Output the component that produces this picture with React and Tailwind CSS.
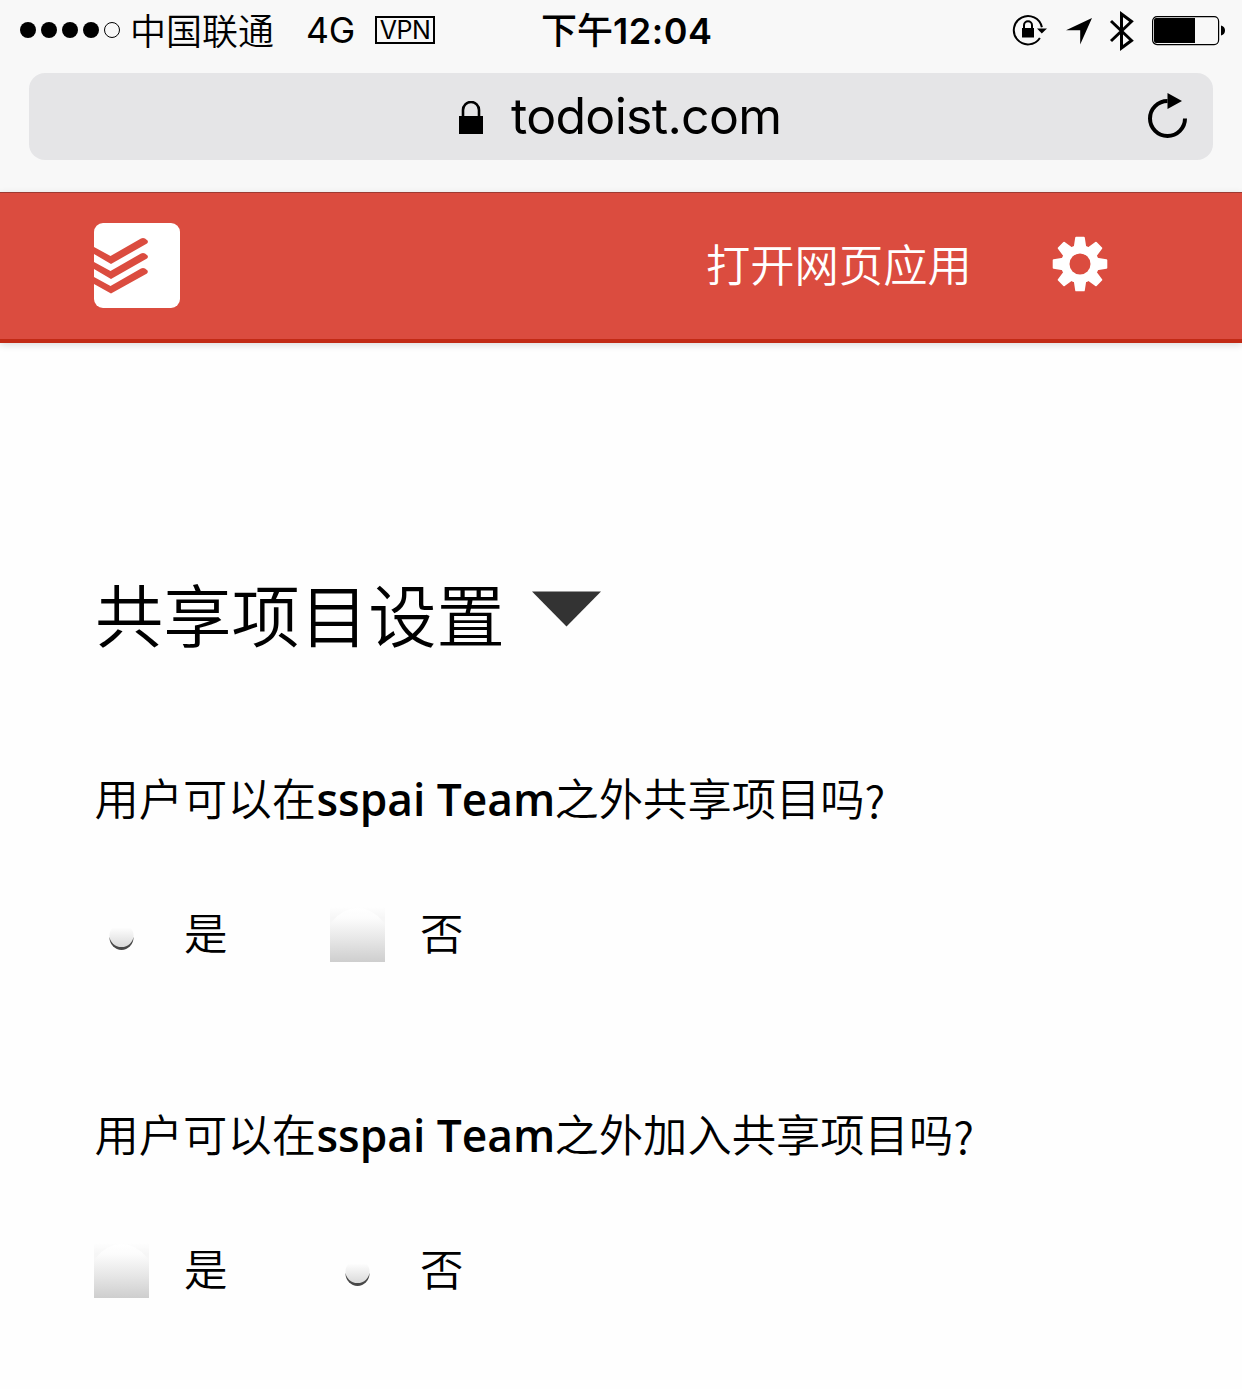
import React from 'react';

function StatusBar() {
  return (
    <div className="flex h-[61px] items-center text-black">
      <div className="flex w-[541px] items-center pl-5">
        <div className="-mt-px flex gap-[5px]">
          <span className="size-4 rounded-full bg-black" />
          <span className="size-4 rounded-full bg-black" />
          <span className="size-4 rounded-full bg-black" />
          <span className="size-4 rounded-full bg-black" />
          <span className="size-4 rounded-full border border-black" />
        </div>
        <span className='-mt-[3px] ml-[10px] w-[144px] font-["Noto_Sans_CJK_SC",sans-serif] text-[36px] leading-[60px] font-[350] whitespace-nowrap'>中国联通</span>
        <span className='mt-px ml-8 w-[49px] font-["Inter",sans-serif] text-[35.5px] leading-[60px] tracking-[-0.2px]'>4G</span>
        <span className='-mt-px ml-[20px] flex h-7 w-[60px] items-center justify-center border-2 border-black font-["Inter",sans-serif] text-[25px] leading-none tracking-[-0.5px]'>VPN</span>
      </div>
      <div className='flex w-[172px] items-center whitespace-nowrap text-[36px] leading-[60px] font-semibold'>
        <span className='-mt-[5px] w-[72px] font-["Noto_Sans_CJK_SC",sans-serif] font-medium'>下午</span>
        <span className='font-["Inter",sans-serif] tracking-[0.5px]'>12:04</span>
      </div>
      <div className="-mt-px ml-[299px] flex items-center">
        <svg width="36" height="32" viewBox="0 0 36 32" fill="none">
          <path d="M29.9 13.2A14.2 14.2 0 1 0 27.9 24" stroke="#000" strokeWidth="2" />
          <path d="M25 14.5h10l-5.200 5z" fill="#000" />
          <path d="M10 14h12v9.500H10z" fill="#000" />
          <path d="M12 14.500v-3.200a4 4 0 0 1 8 0v3.200" stroke="#000" strokeWidth="2" />
        </svg>
        <svg className="mt-[2px] ml-[17px]" width="28" height="28" viewBox="0 0 28 28">
          <path d="M27 1 15.200 27.500V13.200H1z" fill="#000" />
        </svg>
        <svg className="mt-[2px] ml-[16px]" width="26" height="42" viewBox="0 0 26 42" fill="none">
          <path d="M2 11 22.500 30.500 12.500 38V4L22.500 11.500 2 31" stroke="#000" strokeWidth="3" />
        </svg>
        <svg className="mt-[2px] ml-[17px]" width="74" height="30" viewBox="0 0 74 30">
          <rect x="0.600" y="0.600" width="66" height="28" rx="4.500" fill="none" stroke="#000" strokeWidth="1.200" />
          <path d="M4 2H43V27H4a2 2 0 0 1-2-2V4a2 2 0 0 1 2-2z" fill="#000" />
          <path d="M69 9.500q4 1 4 5t-4 5z" fill="#000" />
        </svg>
      </div>
    </div>
  );
}

function AddressBar() {
  return (
    <div className="mx-[29px] mt-3 flex h-[87px] items-center rounded-[16px] bg-[#e5e5e7]">
      <svg className="mt-[2px] ml-[430px]" width="24" height="34" viewBox="0 0 24 34">
        <rect x="0" y="15" width="24" height="18" fill="#000" />
        <path d="M4 16V9a8 8 0 0 1 16 0v7" fill="none" stroke="#000" strokeWidth="2.600" />
      </svg>
      <span className='-mt-[2px] ml-[28px] w-[272px] font-["Inter",sans-serif] text-[50px] leading-[80px] tracking-[-0.7px] whitespace-nowrap'>todoist.com</span>
      <svg className="-mt-[4px] ml-[364px]" width="42" height="48" viewBox="0 0 42 48">
        <path d="M38 27.500A17.500 17.500 0 1 1 20.500 10" fill="none" stroke="#000" strokeWidth="4" />
        <path d="M20.500 2 35 10 20.500 18z" fill="#000" />
      </svg>
    </div>
  );
}

function Header() {
  return (
    <header className="flex h-[151px] items-start border-t border-b-4 border-t-[#9c3a32] border-b-[#c22a15] bg-[#db4c3f] shadow-[0_2px_7px_rgba(0,0,0,0.14)]">
      <svg className="mt-[30px] ml-[94px]" width="86" height="85" viewBox="0 0 86 85">
        <rect width="86" height="85" rx="9" fill="#fff" />
        <g fill="#db4c3f">
          <path d="M0 24 16.500 33 47 15.500Q49 14.500 51 15.500L53.500 17.500Q54.500 19 53 20.500L17 41 0 31z" />
          <path d="M0 39 16.500 48 47 30.500Q49 29.500 51 30.500L53.500 32.500Q54.500 34 53 35.500L17 56 0 46z" />
          <path d="M0 54 16.500 63 47 45.500Q49 44.500 51 45.500L53.500 47.500Q54.500 49 53 50.500L17 70.500 0 61z" />
        </g>
      </svg>
      <span className='mt-[30px] ml-[526px] w-[266px] font-["Noto_Sans_CJK_SC",sans-serif] text-[44.3px] leading-[80px] font-[350] whitespace-nowrap text-white'>打开网页应用</span>
      <svg className="mt-[43px] ml-[80px]" width="56" height="56" viewBox="-28 -28 56 56">
        <g fill="#fff" stroke="#fff" strokeWidth="2" strokeLinejoin="round">
          <path d="M-5.200-17-3.800-26.300h7.600L5.200-17V17L3.800 26.300h-7.600L-5.200 17z" />
          <path d="M-5.200-17-3.800-26.300h7.600L5.200-17V17L3.800 26.300h-7.600L-5.200 17z" transform="rotate(45)" />
          <path d="M-5.200-17-3.800-26.300h7.600L5.200-17V17L3.800 26.300h-7.600L-5.200 17z" transform="rotate(90)" />
          <path d="M-5.200-17-3.800-26.300h7.600L5.200-17V17L3.800 26.300h-7.600L-5.200 17z" transform="rotate(135)" />
          <circle r="18" />
        </g>
        <circle r="10.500" fill="#db4c3f" />
      </svg>
    </header>
  );
}

function Radio({ checked }) {
  if (checked) {
    return (
      <span className="flex size-[55px] items-center justify-center pt-[6px]">
        <svg width="25" height="26" viewBox="0 0 25 26">
          <defs>
            <linearGradient id="knob" x1="0" y1="0" x2="0" y2="1">
              <stop offset="0.150" stopColor="#fefefe" />
              <stop offset="1" stopColor="#dadada" />
            </linearGradient>
          </defs>
          <path d="M0.500 12.500a12 12.500 0 0 0 24 0z" fill="#484848" />
          <ellipse cx="12.500" cy="10.500" rx="12" ry="11.500" fill="url(#knob)" />
        </svg>
      </span>
    );
  }
  return (
    <span className="size-[55px] overflow-hidden bg-linear-to-b from-[#fefefe] to-[#f6f6f6] to-20%">
      <span className="-mx-[8px] mt-px block h-[90px] rounded-t-[50%] bg-[linear-gradient(to_bottom,#fff_0px,#fcfcfc_10px,#e6e6e6_32px,#cecece_54px)]" />
    </span>
  );
}

function Question({ tail, value }) {
  return (
    <section className="h-[336px]">
      <p className='flex h-[78px] items-center pl-[0.5px] font-["Open_Sans","Noto_Sans_CJK_SC",sans-serif] text-[44.3px] leading-[78px] font-[350] whitespace-nowrap text-black'>
        <span className="w-[222px]">用户可以在</span>
        <strong className="w-[238px] font-semibold">sspai Team</strong>
        <span>{tail}</span>
        <span className='font-["Noto_Sans_CJK_SC",sans-serif]'>?</span>
      </p>
      <div className='mt-[69px] flex h-[55px] items-center font-["Noto_Sans_CJK_SC",sans-serif] text-[43.5px] leading-[55px] font-[350] text-black'>
        <Radio checked={value === 'yes'} />
        <span className="-mt-[7px] ml-[35px] w-[146px]">是</span>
        <Radio checked={value === 'no'} />
        <span className="-mt-[7px] ml-[35px]">否</span>
      </div>
    </section>
  );
}

export default function App() {
  return (
    <div className="h-[1389px] w-[1242px] overflow-hidden bg-[#fefefe]">
      <div className="h-[192px] bg-[#f8f8f8]">
        <StatusBar />
        <AddressBar />
      </div>
      <Header />
      <main className="pt-[217px] pl-[95px]">
        <div className="flex h-[110px] items-start">
          <h1 className='-mt-[2px] w-[409px] font-["Noto_Sans_CJK_SC",sans-serif] text-[68.3px] leading-[110px] font-[350] whitespace-nowrap text-black'>共享项目设置</h1>
          <svg className="mt-[30px] ml-[27px]" width="70" height="37" viewBox="0 0 70 37">
            <path d="M1 1.500H70L35.500 36.500z" fill="#333" />
          </svg>
        </div>
        <div className="-ml-px mt-[90px]">
          <Question tail="之外共享项目吗" value="yes" />
          <Question tail="之外加入共享项目吗" value="no" />
        </div>
      </main>
    </div>
  );
}
